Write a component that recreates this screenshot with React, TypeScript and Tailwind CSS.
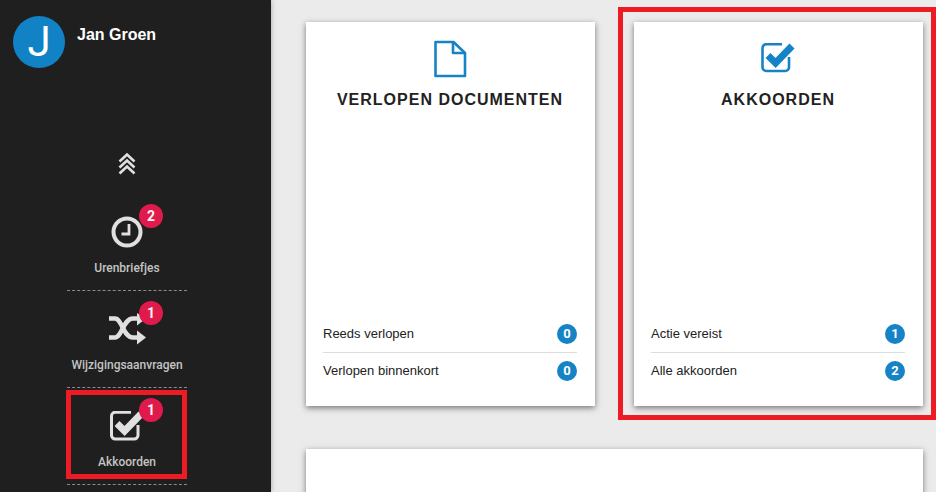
const ClockIcon = () => (
  <svg width="32" height="32" viewBox="0 0 32 32" fill="none" stroke="#e0e0e0">
    <circle cx="16" cy="16" r="13.5" strokeWidth="4" />
    <path d="M18 8V18H10.5" strokeWidth="2.8" />
  </svg>
);

const ShuffleIcon = () => (
  <svg width="37" height="32" viewBox="0 -3 37 32" fill="none" className="shrink-0">
    <path d="M0 2.5H6C13 2.5 14 21.5 24 21.5H29" stroke="#e0e0e0" strokeWidth="4.5" />
    <path d="M0 21.5H6C13 21.5 14 2.5 24 2.5H29" stroke="#e0e0e0" strokeWidth="4.5" />
    <path d="M28 14.5L37 21.5L28 28.5Z" fill="#e0e0e0" />
    <path d="M28 -3L37 2.5L28 9.5Z" fill="#e0e0e0" />
  </svg>
);

const CheckIcon = ({ color, box = 2.6 }: { color: string; box?: number }) => (
  <svg width="36" height="30" viewBox="-1 1 36 30" fill="none">
    <path d="M21 2.2H5.5A3.8 3.8 0 0 0 1.5 6V25A3.8 3.8 0 0 0 5.5 29H24A3.8 3.8 0 0 0 28 25V15" stroke={color} strokeWidth={box} />
    <path d="M7 13.5L14.6 21L31 4" stroke={color} strokeWidth="7" />
  </svg>
);

const FileIcon = () => (
  <svg width="34" height="38" viewBox="0 0 34 38" fill="none" stroke="#1583c6" strokeWidth="2.6" strokeLinejoin="round">
    <path d="M2.5 2H20.5L32 13V36H2.5Z" />
    <path d="M20 2V13H32" />
  </svg>
);

const Chevrons = () => (
  <svg width="20" height="24" viewBox="0 0 20 24" fill="none" stroke="#e0e0e0" strokeWidth="2.6">
    <path d="M2.5 9.5L10 2.5L17.5 9.5" />
    <path d="M2.5 15.5L10 8.5L17.5 15.5" />
    <path d="M2.5 21.5L10 14.5L17.5 21.5" />
  </svg>
);

const NavItem = ({
  icon,
  label,
  count,
  boxed,
}: {
  icon: React.ReactNode;
  label: string;
  count: number;
  boxed?: boolean;
}) => (
  <div className="relative flex h-[97px] w-[120px] flex-col items-center border-b border-dashed border-[#8a8a8a]">
    <div className="mt-[22px] flex h-[32px] items-center justify-center">{icon}</div>
    <div className="mt-[11px] whitespace-nowrap text-[12px] font-medium leading-[18px] text-[#c4c4c4]">{label}</div>
    <div className="absolute left-[72px] top-[10px] flex h-6 w-6 items-center justify-center rounded-full bg-[#e01b4c] text-[14px] font-bold text-[#f4f4f4]">
      {count}
    </div>
    {boxed && <div className="absolute -left-px top-[2px] h-[89px] w-[121px] border-[5px] border-[#ed1c24]" />}
  </div>
);

const Row = ({ label, value, divider }: { label: string; value: number; divider?: boolean }) => (
  <div className={`flex items-center justify-between ${divider ? "h-[37px] border-b border-[#dddddd]" : "h-[36px]"}`}>
    <span className="text-[13px] text-[#222222] [font-family:'Liberation_Sans',sans-serif]">{label}</span>
    <span className="flex h-5 w-5 items-center justify-center rounded-full bg-[#1583c6] text-[13px] font-bold text-white">
      {value}
    </span>
  </div>
);

const Card = ({
  icon,
  title,
  rows,
  boxed,
}: {
  icon: React.ReactNode;
  title: string;
  rows: [string, number][];
  boxed?: boolean;
}) => (
  <div className="relative flex h-[384px] flex-col bg-white pb-[17px] pl-[17px] pr-[18px] shadow-[0_2px_6px_rgba(0,0,0,0.5)]">
    <div className="mt-[18px] flex h-[38px] items-center justify-center">{icon}</div>
    <div className="mt-[12px] text-center text-[16px] font-bold leading-[20px] tracking-[1px] text-[#222222] [font-family:'Liberation_Sans',sans-serif]">
      {title}
    </div>
    <div className="mt-auto">
      <Row label={rows[0][0]} value={rows[0][1]} divider />
      <Row label={rows[1][0]} value={rows[1][1]} />
    </div>
    {boxed && (
      <div className="absolute -bottom-[14px] -left-[16px] -right-[13px] -top-[15px] border-[5px] border-[#ed1c24]" />
    )}
  </div>
);

export default function App() {
  return (
    <div className="flex h-[492px] w-[936px] overflow-hidden bg-[#ebebeb] [font-family:Roboto,sans-serif]">
      <aside className="relative z-10 flex h-full w-[271px] shrink-0 flex-col bg-[#1f1f1f] shadow-[0_0_5px_rgba(0,0,0,0.3)]">
        <div className="flex pl-[13px] pt-[16px]">
          <div className="flex h-[52px] w-[52px] items-center justify-center rounded-full bg-[#1182c5] text-[42px] leading-none text-white">
            J
          </div>
          <div className="ml-[12px] mt-[9px] text-[16px] font-bold leading-5 text-white [font-family:'Liberation_Sans',sans-serif]">
            Jan Groen
          </div>
        </div>
        <div className="flex flex-col items-center pr-[17px]">
          <div className="mt-[84px] flex h-[24px] items-center justify-center">
            <Chevrons />
          </div>
          <div className="mt-[18px] flex flex-col items-center">
            <NavItem icon={<ClockIcon />} label="Urenbriefjes" count={2} />
            <NavItem icon={<ShuffleIcon />} label="Wijzigingsaanvragen" count={1} />
            <NavItem icon={<CheckIcon color="#e0e0e0" box={3} />} label="Akkoorden" count={1} boxed />
          </div>
        </div>
      </aside>
      <main className="flex-1 pl-[35px] pr-[13px] pt-[22px]">
        <div className="grid grid-cols-2 gap-x-[39px]">
          <Card
            icon={<FileIcon />}
            title="VERLOPEN DOCUMENTEN"
            rows={[
              ["Reeds verlopen", 0],
              ["Verlopen binnenkort", 0],
            ]}
          />
          <Card
            icon={
              <div className="mb-[2px]">
                <CheckIcon color="#1583c6" />
              </div>
            }
            title="AKKOORDEN"
            rows={[
              ["Actie vereist", 1],
              ["Alle akkoorden", 2],
            ]}
            boxed
          />
        </div>
        <div className="mt-[43px] h-[200px] bg-white shadow-[0_2px_6px_rgba(0,0,0,0.5)]" />
      </main>
    </div>
  );
}
